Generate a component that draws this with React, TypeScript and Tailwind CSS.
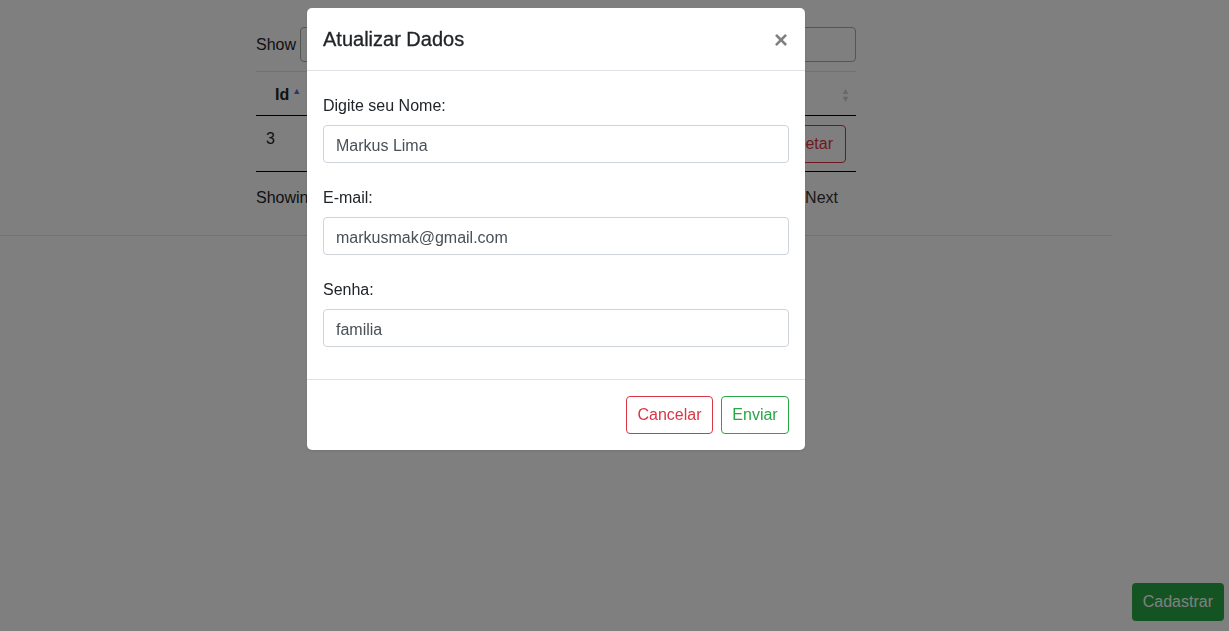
import React from 'react'

const font = 'font-["Segoe_UI","Liberation_Sans",Arial,sans-serif]'

const SortIcon = ({ active }: { active?: boolean }) => (
  <span className="ml-[3px] inline-flex flex-col text-[9px] leading-[8px]">
    <span className={active ? 'text-[#2020c0]/70' : 'text-[#d0d0d0]'}>▲</span>
    <span className={active ? 'text-transparent' : 'text-[#d0d0d0]'}>▼</span>
  </span>
)

const Field = ({ label, value, first }: { label: string; value: string; first?: boolean }) => (
  <div className={first ? '' : 'mt-[22px]'}>
    <label className="mb-2 block pt-px text-base leading-6 text-[#212529]">{label}</label>
    <input
      readOnly
      value={value}
      className="-mt-px block h-[38px] w-full rounded border border-[#ced4da] bg-white px-3 pt-[3px] text-base text-[#495057] outline-none"
    />
  </div>
)

const App = () => {
  return (
    <div className={`relative h-[631px] overflow-hidden bg-white ${font}`}>
      <div className="w-[1112px]">
        <div className="mx-auto w-[600px] pt-[27px] text-base text-[#212529]">
          <div className="flex items-center justify-between">
            <div className="flex items-center gap-1">
              <span>Show</span>
              <select className="h-[35px] w-[60px] rounded border border-[#aaa] bg-white px-1">
                <option>10</option>
              </select>
              <span>entries</span>
            </div>
            <div className="flex items-center gap-1">
              <span>Search:</span>
              <input className="h-[35px] w-[170px] rounded border border-[#aaa] bg-white" />
            </div>
          </div>

          <div className="mt-[9px] border-t border-[#dee2e6]">
            <div className="flex h-[44px] items-center border-b border-black pt-[2px] font-bold">
              <div className="flex w-[80px] items-center pl-[19px]">
                Id
                <SortIcon active />
              </div>
              <div className="flex flex-1 items-center">Nome<SortIcon /></div>
              <div className="flex flex-1 items-center">E-mail<SortIcon /></div>
              <div className="flex w-[140px] items-center justify-end pr-[6px]">
                <SortIcon />
              </div>
            </div>
            <div className="flex h-[56px] items-start border-b border-black pt-[9px]">
              <div className="mt-[2px] w-[80px] pl-[10px] leading-6">3</div>
              <div className="mt-[2px] flex-1 leading-6">Markus Lima</div>
              <div className="mt-[2px] flex-1 leading-6">markusmak@gmail.com</div>
              <div className="flex w-[140px] justify-end gap-2 pr-[10px]">
                <button className="h-[38px] rounded border border-[#dc3545] px-3 text-[#dc3545]">Deletar</button>
              </div>
            </div>
          </div>

          <div className="mt-[14px] flex items-center justify-between">
            <span>Showing 1 to 1 of 1 entries</span>
            <div className="flex items-center gap-4 pr-[18px] text-[#666]">
              <span>Previous</span>
              <span className="text-[#333]">Next</span>
            </div>
          </div>
        </div>
        <div className="mt-[25px] border-t border-[#e5e5e5]" />
      </div>

      <button className="fixed bottom-[10px] right-[5px] h-[38px] rounded bg-[#28a745] px-[11px] text-base text-white">
        Cadastrar
      </button>

      <div className="fixed inset-0 bg-black/50" />

      <div className="fixed inset-y-0 left-0 flex w-[1112px] justify-center pt-[8px]">
        <div className="h-fit w-[498px] rounded-[5px] bg-white shadow">
          <div className="flex h-[63px] items-center justify-between border-b border-[#dee2e6] pl-4 pr-[17px]">
            <h5 className="text-[20px] font-medium text-[#212529] [-webkit-text-stroke:0.3px_#212529]">Atualizar Dados</h5>
            <span className="mt-[2px] text-[24px] font-bold leading-none text-black/50">×</span>
          </div>
          <div className="px-4 pt-[22px] pb-[32px]">
            <Field first label="Digite seu Nome:" value="Markus Lima" />
            <Field label="E-mail:" value="markusmak@gmail.com" />
            <Field label="Senha:" value="familia" />
          </div>
          <div className="flex h-[71px] items-center justify-end gap-2 border-t border-[#dee2e6] pr-4">
            <button className="h-[38px] w-[87px] rounded border border-[#dc3545] text-base text-[#dc3545]">Cancelar</button>
            <button className="h-[38px] w-[68px] rounded border border-[#28a745] text-base text-[#28a745]">Enviar</button>
          </div>
        </div>
      </div>
    </div>
  )
}

export default App
